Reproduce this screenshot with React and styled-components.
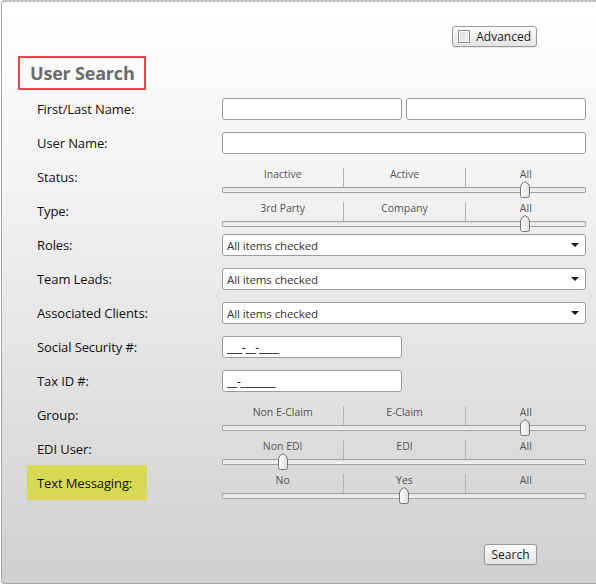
import React from "react";
import styled, { createGlobalStyle } from "styled-components";

const Global = createGlobalStyle`
  html, body { margin: 0; padding: 0; }
  body {
    width: 596px;
    height: 584px;
    overflow: hidden;
    font-family: "Open Sans", "Noto Sans", sans-serif;
    background: #ffffff;
  }
`;

const Panel = styled.div`
  box-sizing: border-box;
  width: 610px;
  height: 584px;
  margin-left: 1px;
  border-left: 1px solid #a8a8a8;
  border-bottom: 1px solid #a8a8a8;
  border-top: 2px dotted #b4b4b4;
  border-radius: 4px 0 0 4px;
  background: linear-gradient(to bottom, #ffffff 0%, #f3f3f3 30%, #e2e2e2 65%, #cfcfcf 100%);
  padding-top: 24px;
  display: flex;
  flex-direction: column;
`;

const TopBar = styled.div`
  display: flex;
  justify-content: flex-end;
  width: 535px;
`;

const Button = styled.button`
  box-sizing: border-box;
  display: inline-flex;
  align-items: center;
  gap: 6px;
  height: ${(p) => p.$h || 21}px;
  width: ${(p) => p.$w}px;
  padding: 0 ${(p) => p.$px || 8}px;
  justify-content: ${(p) => (p.$center ? "center" : "flex-start")};
  border: 1px solid #9a9a9a;
  border-radius: 3px;
  background: linear-gradient(to bottom, #fdfdfd 0%, #f0f0f0 50%, #e4e4e4 100%);
  font-family: "Open Sans", "Noto Sans", sans-serif;
  font-size: 12px;
  color: #1a1a1a;
  box-shadow: 0 1px 1px rgba(0,0,0,0.08);
`;

const CheckBox = styled.span`
  box-sizing: border-box;
  width: 13px;
  height: 13px;
  border: 1px solid #8e8e8e;
  background: linear-gradient(135deg, #dcdcdc 0%, #f6f6f6 100%);
  box-shadow: inset 0 0 0 1px #f4f4f4;
`;

const TitleBox = styled.div`
  box-sizing: border-box;
  align-self: flex-start;
  margin: 9px 0 0 16px;
  width: 128px;
  height: 34px;
  border: 2px solid #e5484b;
  display: flex;
  align-items: center;
  padding-left: 10px;
  font-size: 18px;
  font-weight: 700;
  color: #6c6c6c;
  letter-spacing: -0.2px;
`;

const FormGrid = styled.div`
  display: grid;
  grid-template-columns: 195px 364px;
  grid-auto-rows: 34px;
  margin: 2px 0 0 25px;
`;

const Label = styled.div`
  display: flex;
  align-items: center;
  padding-left: 10px;
  font-size: 13px;
  color: #111;
  letter-spacing: -0.1px;
  background: ${(p) => (p.$highlight ? "#d7d955" : "transparent")};
  margin-top: ${(p) => (p.$highlight ? "-1px" : "0")};
  width: ${(p) => (p.$highlight ? "110px" : "auto")};
`;

const Cell = styled.div`
  display: flex;
  align-items: center;
  gap: 4px;
  position: relative;
`;

const TextBox = styled.div`
  box-sizing: border-box;
  width: ${(p) => p.$w || 364}px;
  height: 22px;
  border: 1px solid #9c9c9c;
  border-radius: 3px;
  background: #ffffff;
  display: flex;
  align-items: center;
  padding-left: 4px;
  font-size: 12px;
  color: #111;
  letter-spacing: -0.3px;
`;

const Select = styled(TextBox)`
  justify-content: space-between;
  padding-right: 6px;
  font-size: 11.5px;
  color: #333;
  letter-spacing: -0.1px;
`;

const Arrow = styled.span`
  width: 0;
  height: 0;
  border-left: 4px solid transparent;
  border-right: 4px solid transparent;
  border-top: 4px solid #1a1a1a;
`;

const SliderWrap = styled.div`
  position: relative;
  width: 364px;
  height: 34px;
`;

const Ticks = styled.div`
  display: grid;
  grid-template-columns: repeat(3, 1fr);
  height: 19px;
  margin-top: 8px;
`;

const Tick = styled.div`
  text-align: center;
  font-size: 10.5px;
  line-height: 13px;
  color: #555;
  border-left: ${(p) => (p.$first ? "none" : "1px solid #b2b2b2")};
`;

const Track = styled.div`
  box-sizing: border-box;
  height: 6px;
  border: 1px solid #a2a2a2;
  border-radius: 1px;
  background: linear-gradient(to bottom, #e4e4e4, #f2f2f2);
`;

const Thumb = styled.svg`
  position: absolute;
  top: 21px;
  width: 10px;
  height: 17px;
  margin-left: -5px;
`;

function Slider({ labels, value }) {
  const left = ((value + 0.5) / labels.length) * 364;
  return (
    <SliderWrap>
      <Ticks>
        {labels.map((l, i) => (
          <Tick key={l} $first={i === 0}>{l}</Tick>
        ))}
      </Ticks>
      <Track />
      <Thumb viewBox="0 0 10 17" style={{ left }}>
        <defs>
          <linearGradient id={`tg${value}`} x1="0" y1="0" x2="1" y2="0">
            <stop offset="0" stopColor="#ffffff" />
            <stop offset="1" stopColor="#dedede" />
          </linearGradient>
        </defs>
        <path
          d="M0.5 6 Q0.5 2.5 5 0.5 Q9.5 2.5 9.5 6 V14.5 Q9.5 16.5 7.5 16.5 H2.5 Q0.5 16.5 0.5 14.5 Z"
          fill={`url(#tg${value})`}
          stroke="#777"
          strokeWidth="1"
        />
      </Thumb>
    </SliderWrap>
  );
}

const Footer = styled.div`
  display: flex;
  justify-content: flex-end;
  width: 535px;
  margin-top: 44px;
`;

export default function App() {
  return (
    <>
      <Global />
      <Panel>
        <TopBar>
          <Button $h={21} $w={85} $px={5}>
            <CheckBox />
            <span>Advanced</span>
          </Button>
        </TopBar>
        <TitleBox>User Search</TitleBox>
        <FormGrid>
          <Label>First/Last Name:</Label>
          <Cell>
            <TextBox $w={180} />
            <TextBox $w={180} />
          </Cell>
          <Label>User Name:</Label>
          <Cell>
            <TextBox />
          </Cell>
          <Label>Status:</Label>
          <Cell>
            <Slider labels={["Inactive", "Active", "All"]} value={2} />
          </Cell>
          <Label>Type:</Label>
          <Cell>
            <Slider labels={["3rd Party", "Company", "All"]} value={2} />
          </Cell>
          <Label>Roles:</Label>
          <Cell>
            <Select>All items checked<Arrow /></Select>
          </Cell>
          <Label>Team Leads:</Label>
          <Cell>
            <Select>All items checked<Arrow /></Select>
          </Cell>
          <Label>Associated Clients:</Label>
          <Cell>
            <Select>All items checked<Arrow /></Select>
          </Cell>
          <Label>Social Security #:</Label>
          <Cell>
            <TextBox $w={180}>___-__-____</TextBox>
          </Cell>
          <Label>Tax ID #:</Label>
          <Cell>
            <TextBox $w={180}>__-_______</TextBox>
          </Cell>
          <Label>Group:</Label>
          <Cell>
            <Slider labels={["Non E-Claim", "E-Claim", "All"]} value={2} />
          </Cell>
          <Label>EDI User:</Label>
          <Cell>
            <Slider labels={["Non EDI", "EDI", "All"]} value={0} />
          </Cell>
          <Label $highlight>Text Messaging:</Label>
          <Cell>
            <Slider labels={["No", "Yes", "All"]} value={1} />
          </Cell>
        </FormGrid>
        <Footer>
          <Button $h={21} $w={53} $center>Search</Button>
        </Footer>
      </Panel>
    </>
  );
}
